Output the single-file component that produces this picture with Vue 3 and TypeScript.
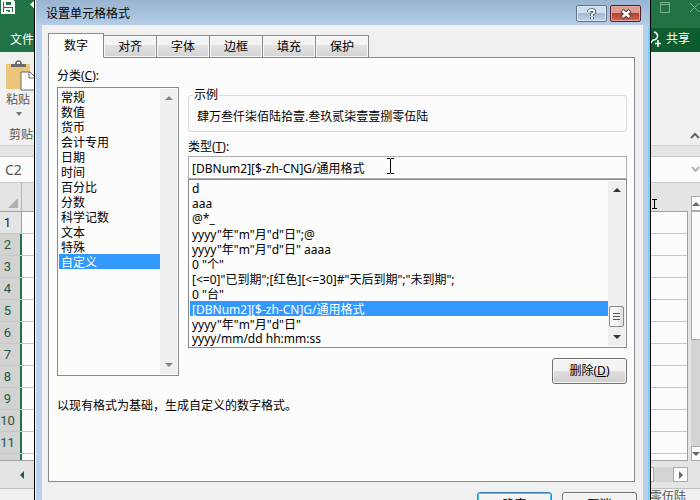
<script setup lang="ts">
import { ref } from 'vue'

const tabs: string[] = ['数字', '对齐', '字体', '边框', '填充', '保护']
const activeTab = ref<string>('数字')

const categories: string[] = [
  '常规', '数值', '货币', '会计专用', '日期', '时间',
  '百分比', '分数', '科学记数', '文本', '特殊', '自定义',
]
const category = ref<string>('自定义')

const formats: string[] = [
  'd',
  'aaa',
  '@*_',
  'yyyy"年"m"月"d"日";@',
  'yyyy"年"m"月"d"日" aaaa',
  '0 "个"',
  '[<=0]"已到期";[红色][<=30]#"天后到期";"未到期";',
  '0 "台"',
  '[DBNum2][$-zh-CN]G/通用格式',
  'yyyy"年"m"月"d"日"',
  'yyyy/mm/dd hh:mm:ss',
]
const format = ref<string>('[DBNum2][$-zh-CN]G/通用格式')

const rows: string[] = ['1', '2', '3', '4', '5', '6', '7', '8', '9', '10', '11', '']
</script>

<template>
  <div class="desktop">
    <div class="excel">
      <header class="app-title">
        <svg class="save" width="16" height="16" viewBox="0 0 16 16" aria-hidden="true">
          <path d="M2 1H13L14 2V13H2ZM5 1V6H12V1M5 13V9H11V13M7 11V13" fill="none" stroke="#fff" stroke-width="2" />
        </svg>
        <svg class="undo" width="8" height="12" viewBox="0 0 8 12" aria-hidden="true"><path d="M5 0V9L0 4.500Z" fill="#fff" /></svg>
        <span class="spacer"></span>
        <svg class="win" width="40" height="12" viewBox="0 0 40 12" aria-hidden="true">
          <path d="M.5 1.500H9.500V11.500H.5ZM.5 3.500H9.500M30 2L39 11M39 2L30 11" fill="none" stroke="#7fb093" />
        </svg>
      </header>
      <nav class="app-tabs">
        <button class="file" type="button">文件</button>
        <span class="spacer"></span>
        <button class="share" type="button">
          <svg width="13" height="16" viewBox="0 0 13 16" aria-hidden="true">
            <path d="M5 1A4 4 0 1 1 4 9L0 14M9 9V16M6 12.500H12" fill="none" stroke="#fff" stroke-width="1.500" />
          </svg>
          共享
        </button>
      </nav>
      <section class="ribbon">
        <button class="paste" type="button">
          <svg width="29" height="31" viewBox="0 0 29 31" aria-hidden="true">
            <path d="M0 4H24V29H0Z" fill="#ecc67c" />
            <path d="M5 7V4H9C9 -1 16 -1 16 4H20V7Z" fill="#6b6b6b" />
            <rect x="11" y="2" width="3" height="2" fill="#f0f0f0" />
            <path d="M15 12H24L29 17V30H15Z" fill="#fff" stroke="#6b6b6b" />
            <path d="M23 12V18H29" fill="none" stroke="#6b6b6b" />
          </svg>
          <span>粘贴</span>
          <svg class="drop" width="6" height="4" viewBox="0 0 6 4" aria-hidden="true"><path d="M0 0H6L3 4Z" fill="#777" /></svg>
        </button>
        <div class="ribbon-foot">
          <span>剪贴板</span>
          <svg width="10" height="7" viewBox="0 0 10 7" aria-hidden="true"><path d="M1 6L5 2L9 6" fill="none" stroke="#666" stroke-width="2" /></svg>
        </div>
      </section>
      <div class="formula-row">
        <span>C2</span>
        <svg width="9" height="7" viewBox="0 0 9 7" aria-hidden="true"><path d="M1 1L4.500 5L8 1" fill="none" stroke="#b5b5b5" stroke-width="2" /></svg>
      </div>
      <div class="sheet">
        <div class="grid">
          <div class="col-head">
            <span class="corner"><svg width="10" height="10" viewBox="0 0 10 10" aria-hidden="true"><path d="M10 0V10H0Z" fill="#b0b0b0" /></svg></span>
          </div>
          <div class="rows">
            <div v-for="(n, i) in rows" :key="i" class="row" :class="{ sel: i > 0 }">
              <span class="row-no">{{ n }}</span><span class="cell"></span>
            </div>
          </div>
        </div>
        <div class="vscroll">
          <span class="vbtn"><svg width="8" height="4" viewBox="0 0 8 4" aria-hidden="true"><path d="M0 4L4 0L8 4Z" fill="#666" /></svg></span>
          <span class="vthumb"></span>
          <span class="spacer"></span>
          <span class="vbtn"><svg width="8" height="4" viewBox="0 0 8 4" aria-hidden="true"><path d="M0 0L4 4L8 0Z" fill="#666" /></svg></span>
        </div>
      </div>
      <div class="sheet-tabs">
        <svg width="4" height="8" viewBox="0 0 4 8" aria-hidden="true"><path d="M4 0V8L0 4Z" fill="#0e6b37" /></svg>
        <span class="spacer"></span>
        <span class="hthumb"></span>
        <span class="htrack"></span>
        <span class="hbtn"><svg width="4" height="8" viewBox="0 0 4 8" aria-hidden="true"><path d="M0 0V8L4 4Z" fill="#666" /></svg></span>
      </div>
      <footer class="status">零伍陆</footer>
    </div>

    <svg class="ibeam outer" width="7" height="10" viewBox="0 0 7 10" aria-hidden="true"><path d="M1 .5H6M3.500 .5V9.500M1 9.500H6" fill="none" stroke="#000" /></svg>

    <section class="dialog" role="dialog" aria-labelledby="dlg-title">
      <div class="dlg-bar">
        <h1 id="dlg-title">设置单元格格式</h1>
        <button class="cap help" type="button" aria-label="帮助">
          <svg width="10" height="12" viewBox="0 0 10 12" aria-hidden="true">
            <path d="M2 4V3Q2.500 2 5 2T7.500 4Q7.500 5 5 6V8M5 9V11" fill="none" stroke="#454c59" stroke-width="3.500" />
            <path d="M2 4V3Q2.500 2 5 2T7.500 4Q7.500 5 5 6V8M5 9V11" fill="none" stroke="#fff" stroke-width="1.800" />
          </svg>
        </button>
        <button class="cap close" type="button" aria-label="关闭">
          <svg width="12" height="10" viewBox="0 0 12 10" aria-hidden="true">
            <path d="M2 1.500L10 8.500M10 1.500L2 8.500" fill="none" stroke="#4d3a42" stroke-width="4.500" />
            <path d="M2.500 2L9.500 8M9.500 2L2.500 8" fill="none" stroke="#fff" stroke-width="2.500" />
          </svg>
        </button>
      </div>
      <div class="dlg-body">
        <div class="tabs" role="tablist">
          <button
            v-for="t in tabs" :key="t" type="button" role="tab" class="tab"
            :class="{ active: t === activeTab }" :aria-selected="t === activeTab" @click="activeTab = t"
          >{{ t }}</button>
        </div>
        <div class="panel" role="tabpanel">
          <div class="columns">
            <div class="col-left">
              <label for="category">分类(<u>C</u>):</label>
              <div class="listbox cats">
                <select id="category" v-model="category" size="12">
                  <option v-for="c in categories" :key="c" :value="c">{{ c }}</option>
                </select>
                <div class="bar off" aria-hidden="true">
                  <svg width="8" height="4" viewBox="0 0 8 4"><path d="M0 4L4 0L8 4Z" fill="#858585" /></svg>
                  <span class="spacer"></span>
                  <svg width="8" height="4" viewBox="0 0 8 4"><path d="M0 0L4 4L8 0Z" fill="#858585" /></svg>
                </div>
              </div>
            </div>
            <div class="col-right">
              <fieldset>
                <legend>示例</legend>
                <output>肆万叁仟柒佰陆拾壹.叁玖贰柒壹壹捌零伍陆</output>
              </fieldset>
              <label for="format">类型(<u>T</u>):</label>
              <div class="field">
                <input id="format" v-model="format" type="text">
                <svg class="ibeam inner" width="7" height="16" viewBox="0 0 7 16" aria-hidden="true"><path d="M0 .5H3L3.500 1L4 .5H7M3.500 1V15M0 15.500H3L3.500 15L4 15.500H7" fill="none" stroke="#000" /></svg>
              </div>
              <div class="listbox types">
                <select v-model="format" size="11" aria-label="类型">
                  <option v-for="f in formats" :key="f" :value="f">{{ f }}</option>
                </select>
                <div class="bar" aria-hidden="true">
                  <svg width="8" height="4" viewBox="0 0 8 4"><path d="M0 4L4 0L8 4Z" fill="#333" /></svg>
                  <span class="spacer"></span>
                  <span class="thumb"><svg width="8" height="9" viewBox="0 0 8 9"><path d="M0 1.500H7M0 4.500H7M0 7.500H7" stroke="#555" /></svg></span>
                  <svg width="8" height="4" viewBox="0 0 8 4"><path d="M0 0L4 4L8 0Z" fill="#333" /></svg>
                </div>
              </div>
              <button class="btn" type="button">删除(<u>D</u>)</button>
            </div>
          </div>
          <p>以现有格式为基础，生成自定义的数字格式。</p>
        </div>
        <div class="actions">
          <button class="btn default" type="button">确定</button>
          <button class="btn" type="button">取消</button>
        </div>
      </div>
    </section>
  </div>
</template>

<style>
body {
  margin: 0;
  overflow: hidden;
}
</style>

<style scoped>
* {
  box-sizing: border-box;
}
.desktop {
  position: relative;
  height: 100vh;
  overflow: hidden;
  font: 12px/16px "Noto Sans", "Noto Sans CJK SC", sans-serif;
  color: #000;
}
button,
input,
select {
  font: inherit;
  color: inherit;
  margin: 0;
}
svg {
  display: block;
  flex: none;
}
.spacer {
  flex: 1;
}

/* Workbook window */
.excel {
  display: flex;
  flex-direction: column;
  height: 100%;
  background: #e4e4e4;
}
.app-title {
  display: flex;
  gap: 14px;
  flex: none;
  height: 28px;
  background: #217346;
}
.win {
  margin-top: 1px;
}
.app-tabs {
  display: flex;
  flex: none;
  height: 24px;
  background: #0d5c2f;
}
.file,
.share {
  display: flex;
  align-items: center;
  border: 0;
  color: #fff;
  background: none;
}
.file {
  width: 50px;
  padding: 0 0 0 10px;
  background: #217346;
}
.share {
  gap: 4px;
  padding: 0 10px 2px 0;
}
.ribbon {
  display: flex;
  flex-direction: column;
  justify-content: space-between;
  flex: none;
  height: 94px;
  color: #555;
  background: #f0f0f0;
  border-bottom: 1px solid #d2d2d2;
}
.paste {
  display: flex;
  flex-direction: column;
  align-items: flex-start;
  align-self: flex-start;
  gap: 1px;
  padding: 8px 0 0 6px;
  border: 0;
  background: none;
}
.paste span {
  margin-bottom: 3px;
}
.drop {
  margin-left: 10px;
}
.ribbon-foot {
  display: flex;
  justify-content: space-between;
  align-items: center;
  padding: 0 0 2px 9px;
}
.formula-row {
  display: flex;
  align-items: center;
  justify-content: space-between;
  flex: none;
  height: 27px;
  margin-top: 10px;
  padding-left: 5px;
  font-size: 14px;
  color: #555;
  background: #fcfcfc;
  border: solid #c9c9c9;
  border-width: 1px 0;
}
.sheet {
  display: flex;
  flex: 1;
  gap: 3px;
  min-height: 0;
}
.grid {
  display: flex;
  flex-direction: column;
  flex: 1;
}
.col-head {
  flex: none;
  height: 28px;
}
.corner {
  display: flex;
  align-items: flex-end;
  justify-content: flex-end;
  width: 22px;
  height: 100%;
  padding: 0 3px 3px 0;
  border-right: 1px solid #b4b4b4;
}
.rows {
  flex: 1;
  min-height: 0;
  overflow: hidden;
  border: solid #a0a0a0;
  border-width: 1px 1px 1px 0;
}
.row {
  display: flex;
  height: 22px;
  border-bottom: 1px solid #c8c8c8;
}
.row-no {
  display: flex;
  justify-content: center;
  width: 22px;
  padding-right: 6px;
  font: 13px/22px Roboto, sans-serif;
  color: #222;
  background: #e4e4e4;
  border-right: 1px solid #a0a0a0;
}
.sel .row-no {
  padding-right: 5px;
  color: #24583f;
  background: #d2d2d2;
  border-right: 2px solid #217346;
}
.cell {
  flex: 1;
  background: #fcfcfc;
}
.vscroll {
  display: flex;
  flex-direction: column;
  width: 9px;
  padding-top: 13px;
  background: linear-gradient(#e4e4e4 13px, #d4d4d4 13px);
}
.vbtn,
.vthumb,
.hbtn,
.hthumb {
  display: flex;
  align-items: center;
  justify-content: center;
  background: #fcfcfc;
  border: 1px solid #aaa;
}
.vbtn {
  flex: none;
  height: 15px;
  border-right: 0;
}
.vthumb {
  flex: none;
  height: 129px;
  border-right: 0;
}
.sheet-tabs {
  display: flex;
  align-items: center;
  flex: none;
  height: 28px;
  padding: 0 12px 0 20px;
  border-bottom: 1px solid #c0c0c0;
}
.hthumb {
  width: 40px;
  height: 15px;
}
.htrack {
  width: 19px;
  height: 15px;
  background: #d4d4d4;
}
.hbtn {
  width: 15px;
  height: 15px;
}
.status {
  flex: none;
  height: 11px;
  padding-right: 14px;
  text-align: right;
  color: #555;
  background: #f0f0f0;
}

/* Mouse pointers */
.ibeam {
  position: absolute;
}
.outer {
  left: 651px;
  top: 199px;
}
.inner {
  left: 199px;
  top: 2px;
}

/* Format cells dialog */
.dialog {
  position: absolute;
  inset: 0 49px -28px 34px;
  display: flex;
  flex-direction: column;
  padding: 0 7px;
  background: #b9d1ea;
  border: solid #000;
  border-width: 0 1px;
  box-shadow: inset 1px 0 #f4f9ff, inset -2px 0 #79d3f5;
}
.dlg-bar {
  display: flex;
  align-items: center;
  gap: 3px;
  flex: none;
  height: 25px;
  margin: 0 -6px;
  padding: 2px 8px 0 10px;
  background: linear-gradient(#99b4d1, #b5cde6);
}
h1 {
  flex: 1;
  margin: 0;
  font: inherit;
}
.cap {
  display: flex;
  align-items: center;
  justify-content: center;
  width: 31px;
  height: 17px;
  padding: 0;
  border: 1px solid #5c738f;
  border-radius: 2px;
  background: linear-gradient(#cfdeed 50%, #a4bad2 50%, #bed2e6);
  box-shadow: inset 0 0 0 1px #dce8f4;
}
.close {
  border-color: #4f2029;
  background: linear-gradient(#dc9c92 50%, #bd3f28 50%, #cf6a4e);
  box-shadow: inset 0 0 0 1px #e6a99e;
}
.dlg-body {
  display: flex;
  flex-direction: column;
  flex: 1;
  padding: 8px 8px 0 6px;
  background: #f0f0f0;
}
.tabs {
  display: flex;
  align-items: flex-end;
  flex: none;
  height: 25px;
  margin-bottom: -1px;
}
.tab {
  width: 53px;
  height: 23px;
  margin: 0;
  padding: 0;
  border: 1px solid #868a92;
  border-left-width: 0;
  background: linear-gradient(#f3f3f3 45%, #e2e2e2 45%, #d2d2d2);
  box-shadow: inset 0 0 0 1px #f6f6f6;
}
.tab.active {
  z-index: 1;
  width: 56px;
  height: 25px;
  border-left-width: 1px;
  border-bottom-color: #fcfcfc;
  background: #fcfcfc;
  box-shadow: none;
}
.panel {
  flex: none;
  padding: 10px 7px 67px 8px;
  background: #fcfcfc;
  border: 1px solid #868a92;
}
.columns {
  display: flex;
  align-items: flex-start;
  gap: 9px;
}
.col-left {
  width: 122px;
}
.col-right {
  display: flex;
  flex-direction: column;
  flex: 1;
  min-width: 0;
  padding-top: 19px;
}
label {
  display: block;
}
.col-left label {
  margin-bottom: 3px;
}
.listbox {
  display: flex;
  padding: 1px;
  background: #fcfcfc;
  border: 1px solid #868a92;
}
.cats {
  height: 289px;
}
.types {
  height: 169px;
}
select {
  flex: 1;
  min-width: 0;
  height: 100%;
  padding: 0;
  border: 0;
  outline: 0;
  border-radius: 0;
  background: transparent;
  scrollbar-width: none;
}
option {
  display: flex;
  align-items: center;
  height: 15px;
  min-height: 15px;
  padding: 0 2px;
}
option:checked {
  background: #3399ff linear-gradient(#3399ff, #3399ff);
  -webkit-text-fill-color: #fff;
}
.bar {
  display: flex;
  flex-direction: column;
  align-items: center;
  width: 17px;
  padding: 7px 0;
  background: #efefef;
}
.thumb {
  display: flex;
  align-items: center;
  justify-content: center;
  width: 15px;
  height: 21px;
  margin-bottom: 8px;
  border: 1px solid #8c8c8c;
  border-radius: 2px;
  background: linear-gradient(90deg, #f7f7f7 50%, #dcdcdc);
}
fieldset {
  min-width: 0;
  height: 45px;
  margin: 0 0 7px;
  padding: 6px 8px 0;
  border: 1px solid #d9dbe4;
  border-radius: 3px;
}
legend {
  padding: 0 1px;
  margin-left: -4px;
}
output {
  display: block;
}
.field {
  position: relative;
  margin-top: 1px;
}
input {
  display: block;
  width: 100%;
  height: 23px;
  padding: 0 3px;
  border: 1px solid #abadb3;
  border-radius: 0;
  outline: 0;
  background: #fcfcfc;
}
.btn {
  width: 75px;
  height: 26px;
  padding: 0;
  border: 1px solid #707070;
  border-radius: 3px;
  background: linear-gradient(#f3f3f3 50%, #dedede 50%, #cfcfcf);
  box-shadow: inset 0 0 0 1px #fafafa;
}
.col-right .btn {
  align-self: flex-end;
  margin-top: 10px;
}
p {
  margin: 14px 0 0;
}
.actions {
  display: flex;
  justify-content: flex-end;
  gap: 10px;
  margin: 10px -2px 0 0;
}
.default {
  border-color: #3c7fb1;
  box-shadow: inset 0 0 0 1px #48c8f0;
}
</style>
